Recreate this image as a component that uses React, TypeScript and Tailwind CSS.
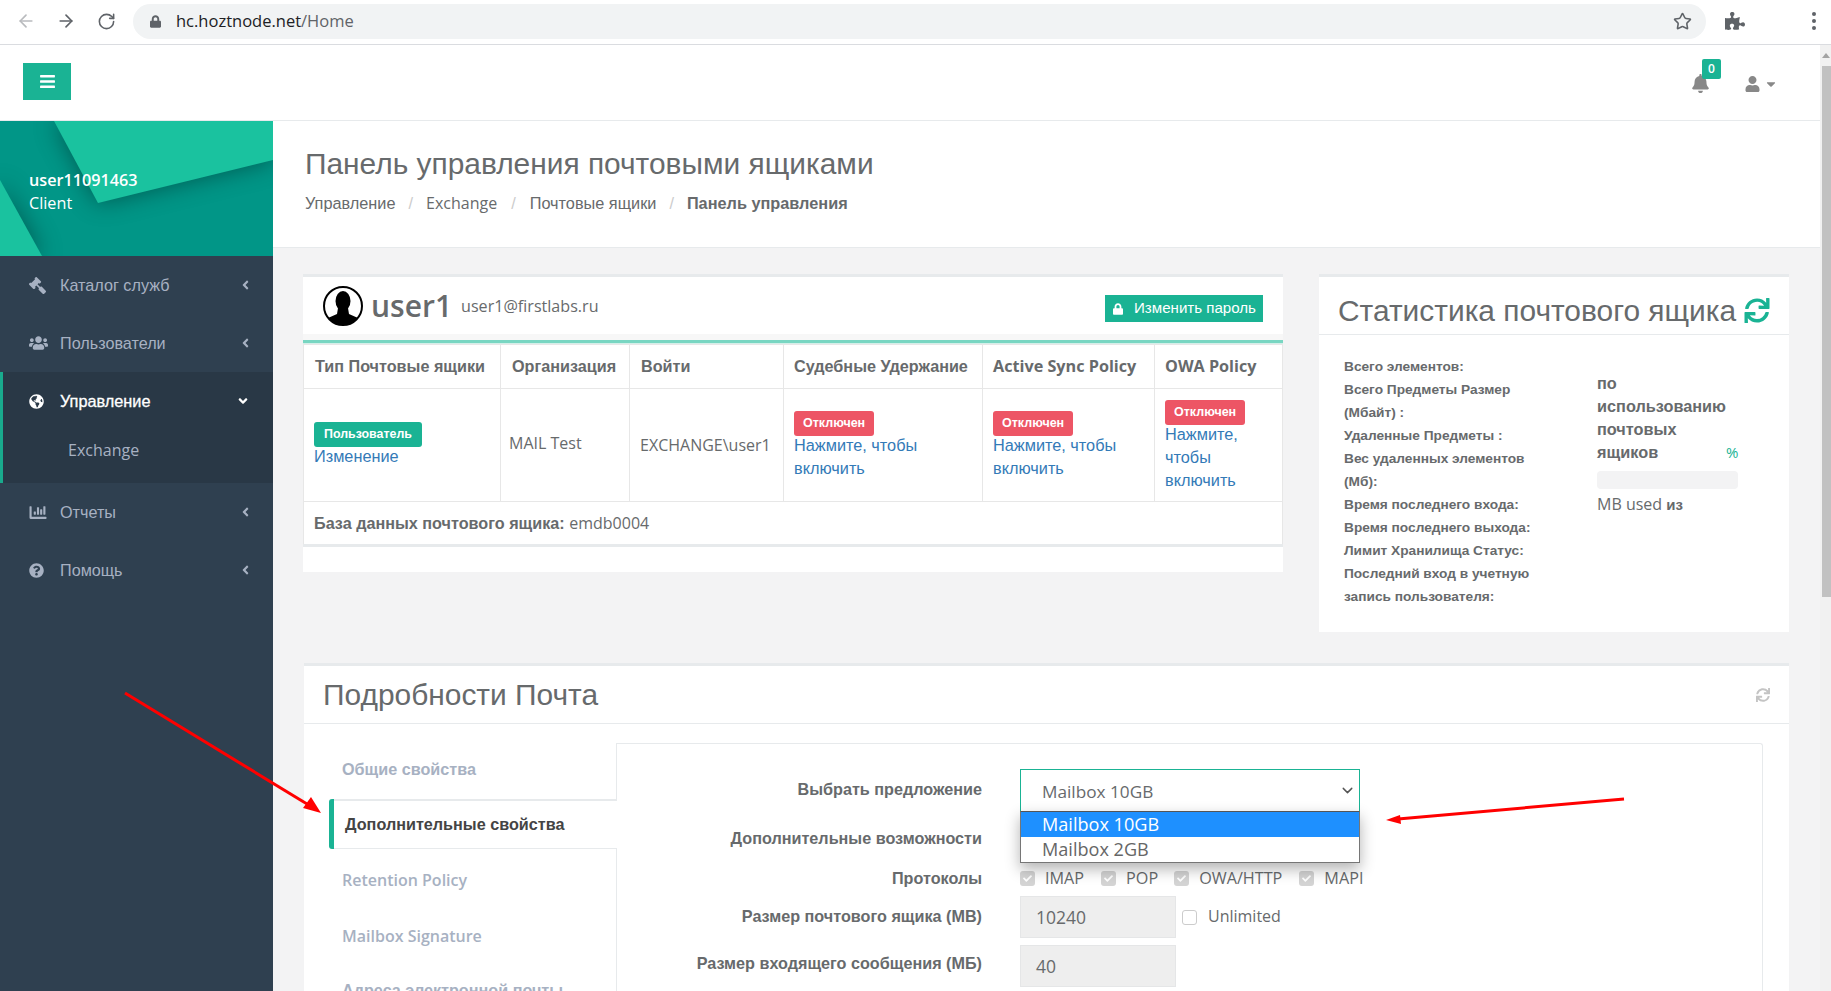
import React from "react";
import { ArrowLeft, ArrowRight, ChevronDown, RotateCw, Star } from "lucide-react";
import {
  FaAngleDown,
  FaAngleLeft,
  FaBars,
  FaBell,
  FaCaretDown,
  FaChartBar,
  FaCheck,
  FaGavel,
  FaGlobeAmericas,
  FaLock,
  FaPuzzlePiece,
  FaQuestionCircle,
  FaSync,
  FaUser,
  FaUsers,
} from "react-icons/fa";

const OPEN = "font-['Open_Sans',sans-serif]";

function BrowserBar() {
  return (
    <div className="h-[45px] shrink-0 flex items-center bg-white border-b border-[#dadce0] pb-[2px]">
      <ArrowLeft className="ml-[16px] h-[20px] w-[20px] text-[#b9bbbe]" />
      <ArrowRight className="ml-[20px] h-[20px] w-[20px] text-[#5f6368]" />
      <RotateCw className="ml-[21px] h-[19px] w-[19px] text-[#5f6368]" />
      <div className="ml-[17px] h-[35px] w-[1573px] rounded-full bg-[#f1f3f4] flex items-center">
        <FaLock className="ml-[17px] h-[13px] w-[11px] text-[#5f6368]" />
        <span className={`ml-[15px] text-[16.5px] text-[#202124] ${OPEN}`}>
          hc.hoztnode.net<span className="text-[#5f6368]">/Home</span>
        </span>
        <Star className="ml-auto mr-[14px] h-[19px] w-[19px] text-[#5f6368]" />
      </div>
      <FaPuzzlePiece className="ml-[19px] h-[20px] w-[20px] text-[#5f6368]" />
      <div className="ml-[67px] flex flex-col gap-[3px]">
        <span className="h-[4px] w-[4px] rounded-full bg-[#5f6368]" />
        <span className="h-[4px] w-[4px] rounded-full bg-[#5f6368]" />
        <span className="h-[4px] w-[4px] rounded-full bg-[#5f6368]" />
      </div>
    </div>
  );
}

function SidebarHeader() {
  return (
    <div className="relative h-[135px] bg-[#019687] overflow-hidden">
      <svg viewBox="0 0 273 135" className="absolute inset-0 h-full w-full">
        <polygon
          className="drop-shadow-[0_0_12px_rgba(0,0,0,0.4)]"
          points="54,0 273,0 273,39 98,82"
          fill="#1ac29f"
        />
        <polygon
          className="drop-shadow-[0_0_12px_rgba(0,0,0,0.4)]"
          points="0,59 42,135 0,135"
          fill="#1ac29f"
        />
      </svg>
      <div className={`absolute left-[29px] top-[48px] text-white text-[16.2px] leading-[23px] ${OPEN}`}>
        <div className="font-semibold">user11091463</div>
        <div>Client</div>
      </div>
    </div>
  );
}

function NavItem({ icon, label }: { icon: React.ReactNode; label: string }) {
  return (
    <div className="h-[58px] flex items-center pl-[29px] pr-[23px] text-[16.2px] text-[#a7b1c2]">
      <span className="w-[31px] shrink-0">{icon}</span>
      <span>{label}</span>
      <FaAngleLeft className="ml-auto h-[14px] w-[9px]" />
    </div>
  );
}

function Sidebar() {
  return (
    <aside className="w-[273px] shrink-0 bg-[#2f4050]">
      <SidebarHeader />
      <NavItem icon={<FaGavel className="h-[17px] w-[17px] -scale-x-100" />} label="Каталог служб" />
      <NavItem icon={<FaUsers className="h-[18px] w-[19px]" />} label="Пользователи" />
      <div className="h-[111px] bg-[#293846] border-l-[3px] border-[#19aa8d]">
        <div className="h-[58px] flex items-center pl-[26px] pr-[24px] text-[16.3px] text-white [-webkit-text-stroke:0.3px]">
          <span className="w-[31px] shrink-0">
            <FaGlobeAmericas className="h-[15px] w-[15px]" />
          </span>
          <span>Управление</span>
          <FaAngleDown className="ml-auto h-[14px] w-[12px]" />
        </div>
        <div className={`pl-[65px] pt-[8px] text-[16px] text-[#a7b1c2] ${OPEN}`}>Exchange</div>
      </div>
      <NavItem icon={<FaChartBar className="h-[17px] w-[18px]" />} label="Отчеты" />
      <NavItem icon={<FaQuestionCircle className="h-[15px] w-[15px]" />} label="Помощь" />
    </aside>
  );
}

function Breadcrumbs() {
  return (
    <div className="mt-[11px] flex items-center text-[16.3px] text-[#676a6c] leading-[23px]">
      <span>Управление</span>
      <span className="mx-[13px] text-[#ccc]">/</span>
      <span className={`${OPEN} text-[16px]`}>Exchange</span>
      <span className="mx-[14px] text-[#ccc]">/</span>
      <span>Почтовые ящики</span>
      <span className="mx-[13px] text-[#ccc]">/</span>
      <strong>Панель управления</strong>
    </div>
  );
}

function Avatar() {
  return (
    <svg viewBox="0 0 40 40" className="h-[40px] w-[40px] shrink-0">
      <clipPath id="avatar-clip">
        <circle cx="20" cy="20" r="19" />
      </clipPath>
      <circle cx="20" cy="20" r="19" fill="#fff" stroke="#000" strokeWidth="2" />
      <g clipPath="url(#avatar-clip)" fill="#000">
        <ellipse cx="20" cy="15" rx="7.5" ry="10" />
        <path d="M15 22h10l1 6 9 4v8H5v-8l9-4z" />
      </g>
    </svg>
  );
}

function EnableLink() {
  return (
    <div className="pt-[1px]">
      <span className="flex h-[25px] w-fit items-center rounded-[3px] bg-[#ed5565] px-[9px] text-[12.5px] font-bold text-white">
        Отключен
      </span>
      <a className="block -mt-[2px] text-[#337ab7]">Нажмите, чтобы включить</a>
    </div>
  );
}

function MailboxCard() {
  const th = "h-[44px] border border-[#e7e7e7] text-left text-[16.2px] font-bold";
  const td = "border border-[#e7e7e7] pl-[10px] pr-[8px] align-middle";

  return (
    <section className="w-[980px] h-[298px] bg-white border-t-[3px] border-[#e7eaec] shrink-0">
      <div className="h-[57px] flex items-center pl-[20px] pr-[20px]">
        <Avatar />
        <span className={`ml-[8px] text-[30px] font-semibold leading-none ${OPEN}`}>user1</span>
        <span className={`ml-[9px] mt-[1px] text-[16.1px] ${OPEN}`}>user1@firstlabs.ru</span>
        <button className="ml-auto mt-[6px] flex h-[27px] w-[158px] items-center bg-[#1ab394] pl-[8px] text-[15.1px] text-white">
          <FaLock className="mr-[11px] h-[12px] w-[10px]" />
          Изменить пароль
        </button>
      </div>
      <div className="h-[6px] bg-[#f7f7f7]" />
      <div className="h-[4px] bg-[#79d6c2] border-b border-[#d5efe9]" />
      <table className="w-[979px] table-fixed border-b-[3px] border-[#e7eaec] text-[16.3px] leading-[23px]">
        <colgroup>
          <col className="w-[197px]" />
          <col className="w-[129px]" />
          <col className="w-[154px]" />
          <col className="w-[199px]" />
          <col className="w-[172px]" />
          <col className="w-[128px]" />
        </colgroup>
        <tbody>
          <tr>
            <th className={`${th} pl-[11px]`}>Тип Почтовые ящики</th>
            <th className={`${th} pl-[11px]`}>Организация</th>
            <th className={`${th} pl-[11px]`}>Войти</th>
            <th className={`${th} pl-[10px]`}>Судебные Удержание</th>
            <th className={`${th} pl-[10px] ${OPEN}`}>Active Sync Policy</th>
            <th className={`${th} pl-[10px] ${OPEN}`}>OWA Policy</th>
          </tr>
          <tr className="h-[113px]">
            <td className={td}>
              <span className="flex h-[25px] w-fit items-center rounded-[3px] bg-[#1ab394] px-[10px] text-[12.4px] font-bold text-white">
                Пользователь
              </span>
              <a className="block -mt-[2px] text-[#337ab7]">Изменение</a>
            </td>
            <td className={`border border-[#e7e7e7] pl-[8px] pb-[3px] text-[16px] ${OPEN}`}>MAIL Test</td>
            <td className={`border border-[#e7e7e7] pl-[10px] text-[16px] ${OPEN}`}>EXCHANGE\user1</td>
            <td className={td}>
              <EnableLink />
            </td>
            <td className={td}>
              <EnableLink />
            </td>
            <td className={td}>
              <EnableLink />
            </td>
          </tr>
          <tr>
            <td colSpan={6} className="h-[44px] border border-[#e7e7e7] pl-[10px]">
              <strong className="text-[16.2px]">База данных почтового ящика:</strong>{" "}
              <span className={`${OPEN} text-[16px]`}>emdb0004</span>
            </td>
          </tr>
        </tbody>
      </table>
    </section>
  );
}

const STAT_LABELS = [
  "Всего элементов:",
  "Всего Предметы Размер (Мбайт) :",
  "Удаленные Предметы :",
  "Вес удаленных элементов (Мб):",
  "Время последнего входа:",
  "Время последнего выхода:",
  "Лимит Хранилища Статус:",
  "Последний вход в учетную запись пользователя:",
];

function StatsCard() {
  return (
    <section className="w-[470px] h-[358px] bg-white border-t-[3px] border-[#e7eaec] shrink-0">
      <div className="h-[58px] flex items-center pl-[19px] pt-[10px] border-b border-[#e7eaec]">
        <h2 className="text-[29.9px] leading-none">Статистика почтового ящика</h2>
        <FaSync className="ml-[8px] h-[25px] w-[26px] text-[#1ab394]" />
      </div>
      <div className="flex pt-[20px] pl-[25px] text-[13.7px] leading-[23px] font-bold">
        <div className="w-[195px] shrink-0">
          {STAT_LABELS.map((label) => (
            <div key={label}>{label}</div>
          ))}
        </div>
        <div className="ml-[58px] w-[141px] pt-[17px]">
          <div className="flex items-end justify-between">
            <span className="w-[130px] text-[16.3px]">по использованию почтовых ящиков</span>
            <span className={`font-normal text-[#1ab394] text-[15px] ${OPEN}`}>%</span>
          </div>
          <div className="mt-[7px] h-[18px] rounded-[4px] bg-[#f3f3f4]" />
          <div className={`mt-[4px] text-[16px] font-normal ${OPEN}`}>
            MB used <span className="font-['Liberation_Sans',sans-serif] font-bold text-[15px]">из</span>
          </div>
        </div>
      </div>
    </section>
  );
}

function CheckBox({ label, className }: { label: string; className?: string }) {
  return (
    <span className={`flex items-center ${className ?? ""}`}>
      <span className="flex h-[15px] w-[15px] items-center justify-center rounded-[3px] bg-[#d4d4d4]">
        <FaCheck className="h-[9px] w-[9px] text-white" />
      </span>
      <span className={`ml-[10px] text-[16.2px] ${OPEN}`}>{label}</span>
    </span>
  );
}

function FormRow({
  label,
  className,
  labelClass,
  children,
}: {
  label: string;
  className: string;
  labelClass?: string;
  children?: React.ReactNode;
}) {
  return (
    <div className={`flex items-center ${className}`}>
      <label className={`w-[365px] shrink-0 text-right text-[16.2px] font-bold ${labelClass ?? "pb-[2px]"}`}>
        {label}
      </label>
      <div className="ml-[38px] relative flex flex-1 items-center">{children}</div>
    </div>
  );
}

function OfferForm() {
  return (
    <div className="flex-1 border-t border-r border-[#e7eaec] rounded-tr-[3px] pt-[25px]">
      <FormRow label="Выбрать предложение" className="h-[43px]">
        <div className={`relative flex h-[43px] w-[340px] items-center border border-[#1ab394] pl-[21px] pt-[2px] text-[17.2px] ${OPEN}`}>
          Mailbox 10GB
          <ChevronDown className="absolute right-[3px] top-[12px] h-[17px] w-[17px] text-[#555]" />
          <div className="absolute -left-px top-[41px] z-10 w-[340px] border border-[#767676] border-t-[#555] bg-white text-[18.1px] leading-[25px] shadow-[0_6px_14px_rgba(0,0,0,0.3)]">
            <div className="h-[25px] bg-[#1e90ff] pl-[21px] text-white">Mailbox 10GB</div>
            <div className="h-[25px] pl-[21px] text-[#666]">Mailbox 2GB</div>
          </div>
        </div>
      </FormRow>
      <FormRow label="Дополнительные возможности" className="h-[54px]">
        <span className="h-[14px] w-[14px] rounded-[2px] border border-[#767676]" />
      </FormRow>
      <FormRow label="Протоколы" labelClass="pb-0" className="h-[24px]">
        <CheckBox label="IMAP" />
        <CheckBox label="POP" className="ml-[17px]" />
        <CheckBox label="OWA/HTTP" className="ml-[16px]" />
        <CheckBox label="MAPI" className="ml-[17px]" />
      </FormRow>
      <FormRow label="Размер почтового ящика (МВ)" className="h-[42px] mt-[6px]">
        <div className={`flex h-[42px] w-[156px] items-center border border-[#e5e6e7] bg-[#eeeeee] pl-[15px] text-[17.5px] ${OPEN}`}>
          10240
        </div>
        <span className="ml-[6px] h-[15px] w-[15px] rounded-[3px] border border-[#ccc] bg-white" />
        <span className={`ml-[11px] -mt-[2px] text-[16px] ${OPEN}`}>Unlimited</span>
      </FormRow>
      <FormRow label="Размер входящего сообщения (МБ)" labelClass="pb-[5px]" className="h-[42px] mt-[7px]">
        <div className={`flex h-[42px] w-[156px] items-center border border-[#e5e6e7] bg-[#eeeeee] pl-[15px] text-[17.5px] ${OPEN}`}>
          40
        </div>
      </FormRow>
    </div>
  );
}

function DetailsCard() {
  const tab = "flex items-center border-r border-[#e7eaec] pl-[13px] text-[16.2px] font-bold text-[#a7b1c2]";

  return (
    <section className="mt-[31px] ml-[1px] w-[1485px] bg-white border-t-[3px] border-[#e7eaec]">
      <div className="h-[58px] flex items-center pl-[19px] pr-[19px] border-b border-[#e7eaec]">
        <h2 className="text-[29.9px] leading-none">Подробности Почта</h2>
        <FaSync className="ml-auto h-[14px] w-[14px] text-[#c4c4c4]" />
      </div>
      <div className="flex pt-[19px] pl-[25px] pr-[26px]">
        <nav className="w-[288px] shrink-0">
          <div className={`${tab} h-[56px] pb-[3px]`}>Общие свойства</div>
          <div className="flex h-[50px] items-center rounded-l-[3px] border-l-[5px] border-[#1ab394]">
            <div className="flex h-full flex-1 items-center border-y border-t-2 border-[#e7eaec] pl-[11px] text-[16.2px] font-bold text-[#444]">
              Дополнительные свойства
            </div>
          </div>
          <div className={`${tab} h-[62px] ${OPEN} font-semibold text-[16px]`}>Retention Policy</div>
          <div className={`${tab} h-[49px] ${OPEN} font-semibold text-[16px]`}>Mailbox Signature</div>
          <div className={`${tab} h-[60px]`}>Адреса электронной почты</div>
        </nav>
        <OfferForm />
      </div>
    </section>
  );
}

function Arrows() {
  return (
    <svg viewBox="0 0 1831 991" className="absolute inset-0 z-20 h-[991px] w-[1831px] pointer-events-none">
      <line x1="125" y1="693" x2="312" y2="807" stroke="#ff0000" strokeWidth="3" />
      <polygon points="321,813 303,808 311,797" fill="#ff0000" />
      <line x1="1624" y1="799" x2="1398" y2="819" stroke="#ff0000" strokeWidth="3" />
      <polygon points="1386,820 1400,815 1401,824" fill="#ff0000" />
    </svg>
  );
}

function Scrollbar() {
  return (
    <div className="relative w-[11px] shrink-0 bg-[#f1f1f1]">
      <span className="absolute left-[2px] top-[8px] border-x-[4px] border-b-[5px] border-x-transparent border-b-[#a3a3a3]" />
      <div className="absolute left-[2px] top-[21px] h-[531px] w-[9px] bg-[#c1c1c1]" />
    </div>
  );
}

export default function App() {
  return (
    <div className="relative flex h-[991px] w-[1831px] flex-col overflow-hidden bg-white font-['Liberation_Sans',sans-serif] text-[#676a6c]">
      <BrowserBar />
      <div className="flex flex-1 min-h-0">
        <div className="flex flex-1 min-w-0 flex-col">
          <header className="h-[76px] shrink-0 flex items-center border-b border-[#e7eaec] pl-[23px] pr-[42px]">
            <button className="flex h-[37px] w-[48px] items-center justify-center bg-[#1ab394] text-white -mt-[2px]">
              <FaBars className="h-[17px] w-[17px]" />
            </button>
            <div className="relative ml-auto mr-[34px] mt-[2px]">
              <FaBell className="h-[19px] w-[19px] text-[#888]" />
              <span className={`absolute -right-[11px] -top-[15px] flex h-[20px] w-[19px] items-center justify-center rounded-[2px] bg-[#1ab394] text-[12px] font-semibold text-white ${OPEN}`}>
                0
              </span>
            </div>
            <FaUser className="mt-[2px] h-[16px] w-[17px] text-[#888]" />
            <FaCaretDown className="ml-[3px] mt-[3px] h-[14px] w-[14px] text-[#888]" />
          </header>
          <div className="flex flex-1 min-h-0">
            <Sidebar />
            <main className="flex-1 min-w-0 bg-[#f3f3f4]">
              <div className="h-[127px] bg-white border-b border-[#e7eaec] pl-[32px] pt-[26px]">
                <h1 className="text-[29.9px] leading-[34px]">Панель управления почтовыми ящиками</h1>
                <Breadcrumbs />
              </div>
              <div className="pl-[30px] pt-[26px]">
                <div className="flex items-start gap-[36px]">
                  <MailboxCard />
                  <StatsCard />
                </div>
                <DetailsCard />
              </div>
            </main>
          </div>
        </div>
        <Scrollbar />
      </div>
      <Arrows />
    </div>
  );
}
